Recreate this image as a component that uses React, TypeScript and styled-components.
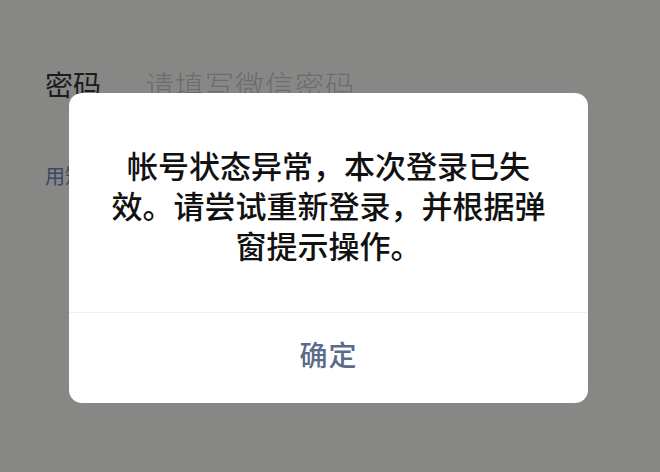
import styled, { createGlobalStyle } from 'styled-components';

const GlobalStyle = createGlobalStyle`
  html, body {
    margin: 0;
    padding: 0;
    background: #878786;
    font-family: "Noto Sans CJK SC", "Noto Sans", sans-serif;
  }
`;

const Screen = styled.div`
  position: relative;
  width: 660px;
  height: 472px;
  overflow: hidden;
  background: #878786;
`;

// dimmed login form underneath the modal
const Form = styled.div`
  display: flex;
  flex-direction: column;
  padding: 64px 0 0 45px;
  gap: 58px;
`;

const FieldRow = styled.div`
  display: flex;
  align-items: center;
  gap: 44px;
`;

const FieldLabel = styled.span`
  font-size: 28px;
  line-height: 40px;
  color: #1c1c1c;
`;

const Placeholder = styled.span`
  font-size: 29px;
  line-height: 40px;
  font-weight: 300;
  color: #6c6c6c;
  letter-spacing: 1px;
`;

const SwitchLink = styled.span`
  font-size: 20px;
  line-height: 28px;
  color: #3e4860;
`;

const Dialog = styled.div`
  position: absolute;
  left: 69px;
  top: 93px;
  width: 519px;
  height: 310px;
  background: #ffffff;
  border-radius: 13px;
  display: flex;
  flex-direction: column;
`;

const Message = styled.div`
  flex: 0 0 219px;
  box-sizing: border-box;
  padding: 52px 20px 0;
  display: flex;
  flex-direction: column;
  align-items: center;
`;

const Line = styled.span`
  font-size: 31px;
  line-height: 40px;
  font-weight: 500;
  color: #111111;
  white-space: nowrap;
`;

const Divider = styled.div`
  height: 1px;
  background: #f0f0f0;
`;

const ConfirmButton = styled.button`
  flex: 1;
  border: none;
  background: transparent;
  font-family: inherit;
  font-size: 28px;
  font-weight: 500;
  color: #5b6b8c;
  letter-spacing: 1px;
  padding: 0 0 8px;
`;

export default function App() {
  return (
    <Screen>
      <GlobalStyle />
      <Form>
        <FieldRow>
          <FieldLabel>密码</FieldLabel>
          <Placeholder>请填写微信密码</Placeholder>
        </FieldRow>
        <SwitchLink>用短信验证码登录</SwitchLink>
      </Form>
      <Dialog>
        <Message>
          <Line>帐号状态异常，本次登录已失</Line>
          <Line>效。请尝试重新登录，并根据弹</Line>
          <Line>窗提示操作。</Line>
        </Message>
        <Divider />
        <ConfirmButton>确定</ConfirmButton>
      </Dialog>
    </Screen>
  );
}
